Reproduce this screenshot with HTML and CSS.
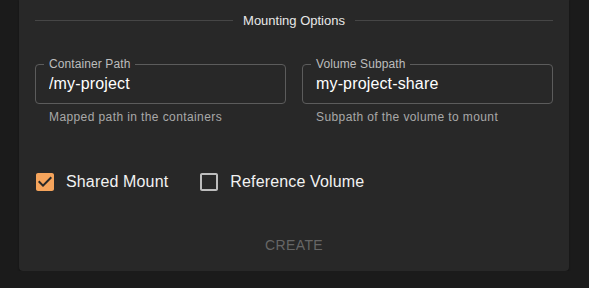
FILE: index.html
```html
<!DOCTYPE html>
<html lang="en">
<head>
  <meta charset="UTF-8">
  <title>Mounting Options</title>
  <link rel="stylesheet" href="styles.css">
</head>
<body>
  <div class="card">
    <div class="divider">
      <span class="divider-line"></span>
      <span class="divider-text">Mounting Options</span>
      <span class="divider-line"></span>
    </div>

    <div class="fields">
      <div class="field">
        <div class="outline">
          <span class="label">Container Path</span>
          <input class="input" type="text" value="/my-project">
        </div>
        <p class="helper">Mapped path in the containers</p>
      </div>
      <div class="field">
        <div class="outline">
          <span class="label">Volume Subpath</span>
          <input class="input" type="text" value="my-project-share">
        </div>
        <p class="helper">Subpath of the volume to mount</p>
      </div>
    </div>

    <div class="checks">
      <label class="check">
        <svg class="box checked" viewBox="0 0 24 24" width="24" height="24"><path d="M19 3H5c-1.11 0-2 .9-2 2v14c0 1.1.89 2 2 2h14c1.11 0 2-.9 2-2V5c0-1.1-.89-2-2-2zm-9 14l-5-5 1.41-1.41L10 14.17l7.59-7.59L19 8l-9 9z"/></svg>
        <span class="check-text">Shared Mount</span>
      </label>
      <label class="check">
        <svg class="box" viewBox="0 0 24 24" width="24" height="24"><path d="M19 5v14H5V5h14m0-2H5c-1.1 0-2 .9-2 2v14c0 1.1.9 2 2 2h14c1.1 0 2-.9 2-2V5c0-1.1-.9-2-2-2z"/></svg>
        <span class="check-text">Reference Volume</span>
      </label>
    </div>

    <div class="actions">
      <button class="create" disabled>Create</button>
    </div>
  </div>
</body>
</html>
```

FILE: styles.css
```css
body {
  margin: 0;
  background-color: #1b1b1b;
  font-family: "Liberation Sans", Arial, sans-serif;
  color: #fff;
}
.card {
  margin: 0 20px 0 19px;
  background-color: #282828;
  border-radius: 0 0 4px 4px;
  padding: 12px 16px 0 16px;
  height: 259px;
  box-shadow: 0 1px 2px rgba(0, 0, 0, 0.4);
}
.divider {
  display: flex;
  align-items: center;
  height: 16px;
}
.divider-line {
  flex: 1;
  border-top: 1px solid #464646;
}
.divider-text {
  padding: 0 10px;
  font-size: 13px;
  color: #e8e8e8;
}
.fields {
  display: flex;
  gap: 16px;
  margin-top: 30px;
}
.field {
  flex: 1;
}
.outline {
  position: relative;
  height: 40px;
  border: 1px solid #5c5c5c;
  border-radius: 4px;
  box-sizing: border-box;
  margin-top: 6px;
}
.label {
  position: absolute;
  top: -8px;
  left: 8px;
  padding: 0 5px;
  background-color: #282828;
  font-size: 12px;
  line-height: 14px;
  letter-spacing: 0.1px;
  color: #bdbdbd;
}
.input {
  width: 100%;
  box-sizing: border-box;
  height: 38px;
  padding: 0 13px;
  border: none;
  background: transparent;
  color: #fff;
  font-family: inherit;
  font-size: 16px;
  letter-spacing: 0.15px;
  outline: none;
}
.helper {
  margin: 5px 0 0 14px;
  font-size: 12px;
  line-height: 16px;
  letter-spacing: 0.4px;
  color: #a8a8a8;
}
.checks {
  display: flex;
  gap: 32px;
  margin-top: 48px;
  padding-left: 1px;
}
.check {
  display: flex;
  align-items: center;
  gap: 9px;
}
.box {
  margin: -3px;
  fill: #bdbdbd;
}
.box.checked {
  fill: #f5a45c;
}
.check-text {
  font-size: 16px;
  letter-spacing: 0.15px;
  color: #f2f2f2;
  margin-left: 3px;
}
.actions {
  display: flex;
  justify-content: center;
  margin-top: 40px;
}
.create {
  background: none;
  border: none;
  padding: 6px 8px;
  font-family: inherit;
  font-size: 14px;
  letter-spacing: 0.4px;
  text-transform: uppercase;
  color: #666;
}
```
